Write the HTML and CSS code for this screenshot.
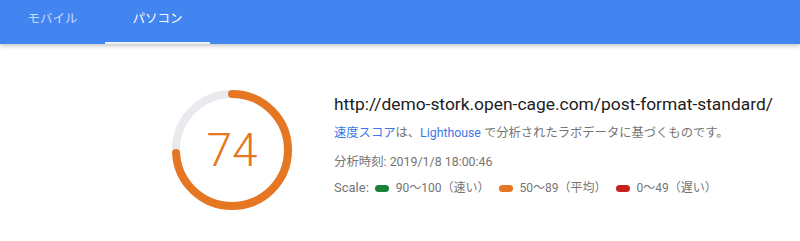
FILE: index.html
```html
<!DOCTYPE html>
<html lang="ja">
<head>
<meta charset="utf-8">
<link rel="stylesheet" href="styles.css">
</head>
<body>
<header class="tabs">
  <div class="tab">モバイル</div>
  <div class="tab active">パソコン</div>
</header>
<main class="summary">
  <div class="gauge">
    <svg class="gauge-svg" viewBox="0 0 120 120" width="120" height="120">
      <circle class="gauge-base" cx="60" cy="60" r="56"></circle>
      <circle class="gauge-arc" cx="60" cy="60" r="56" transform="rotate(-90 60 60)" stroke-dasharray="260.4 351.9"></circle>
    </svg>
    <div class="gauge-value">74</div>
  </div>
  <div class="info">
    <div class="url">http://demo-stork.open-cage.com/post-format-standard/</div>
    <div class="desc"><span class="link">速度スコア</span>は、<span class="link">Lighthouse</span> で分析されたラボデータに基づくものです。</div>
    <div class="time">分析時刻: 2019/1/8 18:00:46</div>
    <div class="scale">
      <span class="label">Scale:</span>
      <span class="item"><span class="pill green"></span>90〜100（速い）</span>
      <span class="item"><span class="pill orange"></span>50〜89（平均）</span>
      <span class="item"><span class="pill red"></span>0〜49（遅い）</span>
    </div>
  </div>
</main>
</body>
</html>
```
FILE: styles.css
```css
* { box-sizing: border-box; }
html, body { margin: 0; padding: 0; background: #fff; }
body {
  width: 800px;
  height: 241px;
  overflow: hidden;
  font-family: Roboto, "Noto Sans CJK JP", sans-serif;
}
.tabs {
  display: flex;
  height: 44px;
  background: #4285f0;
  box-shadow: 0 2px 4px rgba(0,0,0,0.22);
}
.tab {
  width: 105px;
  display: flex;
  align-items: center;
  justify-content: center;
  padding-bottom: 8px;
  font-size: 12.5px;
  color: rgba(255,255,255,0.72);
  border-bottom: 2px solid transparent;
}
.tab.active {
  color: #fff;
  border-bottom-color: rgba(255,255,255,0.9);
}
.summary {
  display: flex;
  align-items: flex-start;
  padding: 46px 0 0 172px;
}
.gauge {
  position: relative;
  width: 120px;
  height: 120px;
  flex: none;
}
.gauge-svg { display: block; }
.gauge-base {
  fill: none;
  stroke: #e8eaed;
  stroke-width: 8;
}
.gauge-arc {
  fill: none;
  stroke: #e67722;
  stroke-width: 8;
  stroke-linecap: round;
}
.gauge-value {
  position: absolute;
  inset: 0;
  display: flex;
  align-items: center;
  justify-content: center;
  font-size: 46px;
  font-weight: 300;
  color: #e67722;
}
.info {
  margin-left: 42px;
  padding-top: 2px;
}
.url {
  font-size: 17.4px;
  color: #212121;
  line-height: 24px;
}
.desc {
  margin-top: 8px;
  font-size: 12.3px;
  line-height: 18px;
  color: #757575;
}
.link { color: #3b78e7; }
.time {
  margin-top: 11px;
  font-size: 12.4px;
  line-height: 18px;
  color: #757575;
}
.scale {
  margin-top: 8px;
  font-size: 12px;
  line-height: 18px;
  color: #757575;
  display: flex;
  align-items: center;
}
.label {
  font-size: 13px;
  margin-right: 6px;
}
.item {
  display: inline-flex;
  align-items: center;
  margin-right: 9px;
}
.pill {
  display: inline-block;
  width: 14px;
  height: 7px;
  border-radius: 4px;
  margin-right: 7px;
}
.green { background: #178239; }
.orange { background: #e67722; }
.red { background: #c5221f; }
```
